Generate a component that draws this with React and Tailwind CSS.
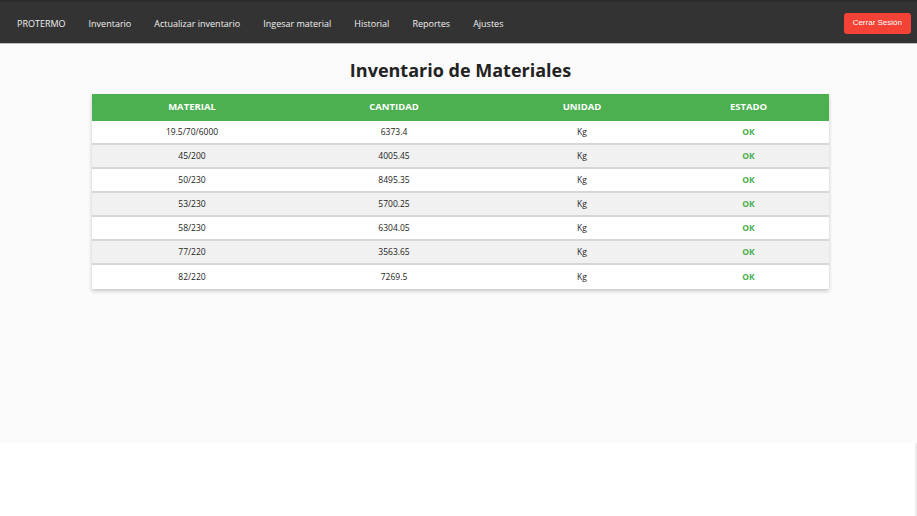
import React from "react";

const rows = [
  { material: "19.5/70/6000", cantidad: "6373.4", unidad: "Kg", estado: "OK" },
  { material: "45/200", cantidad: "4005.45", unidad: "Kg", estado: "OK" },
  { material: "50/230", cantidad: "8495.35", unidad: "Kg", estado: "OK" },
  { material: "53/230", cantidad: "5700.25", unidad: "Kg", estado: "OK" },
  { material: "58/230", cantidad: "6304.05", unidad: "Kg", estado: "OK" },
  { material: "77/220", cantidad: "3563.65", unidad: "Kg", estado: "OK" },
  { material: "82/220", cantidad: "7269.5", unidad: "Kg", estado: "OK" },
];

const links = ["Inventario", "Actualizar inventario", "Ingesar material", "Historial", "Reportes", "Ajustes"];

export default function App() {
  return (
    <div className="w-[917px] h-[516px] bg-white flex flex-col" style={{ fontFamily: "'Open Sans', sans-serif" }}>
      <nav className="h-[44px] bg-[#333333] border-t-2 border-[#2a2a2a] border-b border-b-[#bdbdbd] flex items-center pl-[17px] pr-[6px]">
        <span className="text-[9px] text-[#f0f0f0] mr-[23px] mt-[3px]">PROTERMO</span>
        <div className="flex items-center gap-[23px] mt-[3px]">
          {links.map((l) => (
            <span key={l} className="text-[9px] text-[#f0f0f0]">{l}</span>
          ))}
        </div>
        <button
          className="ml-auto h-[21px] px-[9px] rounded-[3px] bg-[#f44336] text-white text-[8px] mt-[1px]"
          style={{ fontFamily: "'Liberation Sans', sans-serif" }}
        >
          Cerrar Sesión
        </button>
      </nav>
      <main className="h-[399px] bg-[#fbfbfb] flex flex-col items-center pl-[4px]">
        <h1 className="text-[18px] font-bold text-[#222] mt-[13px] mb-[11px] leading-[26px]">Inventario de Materiales</h1>
        <div className="w-[737px] shadow-[0_2px_4px_rgba(0,0,0,0.22)]">
          <div className="flex h-[27px] items-center bg-[#4caf50] text-white text-[9.5px] font-bold">
            <div className="w-[200px] text-center">MATERIAL</div>
            <div className="w-[204px] text-center">CANTIDAD</div>
            <div className="w-[172px] text-center">UNIDAD</div>
            <div className="w-[161px] text-center">ESTADO</div>
          </div>
          {rows.map((r, i) => (
            <div
              key={r.material}
              className={`flex h-[24px] items-center text-[8.5px] text-[#222] ${i < rows.length - 1 ? "border-b-2 border-[#d6d6d6]" : ""} ${i % 2 === 1 ? "bg-[#f1f1f1]" : "bg-white"}`}
            >
              <div className="w-[200px] text-center">{r.material}</div>
              <div className="w-[204px] text-center">{r.cantidad}</div>
              <div className="w-[172px] text-center">{r.unidad}</div>
              <div className="w-[161px] text-center font-bold text-[#4caf50]">{r.estado}</div>
            </div>
          ))}
        </div>
      </main>
      <div className="flex-1 bg-white flex justify-end">
        <div className="w-[2px] bg-[#ececec]" />
      </div>
    </div>
  );
}
